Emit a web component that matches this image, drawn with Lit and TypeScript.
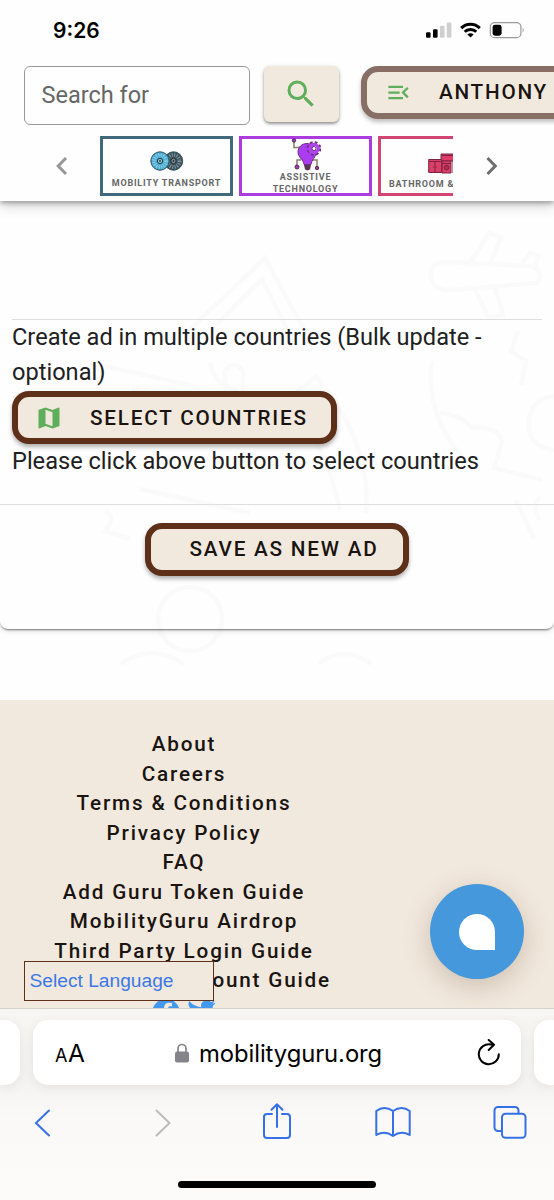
import { LitElement, html, css, svg } from "lit";
import { customElement } from "lit/decorators.js";

const FOOTER_LINKS = [
  "About",
  "Careers",
  "Terms & Conditions",
  "Privacy Policy",
  "FAQ",
  "Add Guru Token Guide",
  "MobilityGuru Airdrop",
  "Third Party Login Guide",
];

@customElement("status-bar")
class StatusBar extends LitElement {
  static styles = css`
    :host { display: flex; height: 61px; padding: 0 29px 0 53px; box-sizing: border-box; justify-content: space-between; }
    .time { font: 600 21px/61px Inter, sans-serif; letter-spacing: 0; color: #000; }
    .signals { margin-top: 20px; display: block; }
  `;
  render() {
    return html`
      <span class="time">9:26</span>
      <svg class="signals" width="100" height="22" viewBox="0 0 100 22">
        <rect x="1" y="12.2" width="4.6" height="5.6" rx="1.2" />
        <rect x="8" y="9.2" width="4.6" height="8.6" rx="1.2" />
        <rect x="15" y="5.8" width="4.6" height="12" rx="1.2" fill="#cfcfcf" />
        <rect x="21.8" y="2.4" width="4.6" height="15.4" rx="1.2" fill="#cfcfcf" />
        <g fill="none" stroke="#000" stroke-width="3">
          <path d="M36.2 8.1a13.2 13.2 0 0 1 18.6 0" />
          <path d="M39.7 11.8a8.2 8.2 0 0 1 11.6 0" />
        </g>
        <path d="M45.5 17.6l-3.1-3.1a4.4 4.4 0 0 1 6.2 0z" />
        <rect x="65.3" y="2.7" width="30.6" height="15" rx="4.3" fill="none" stroke="#999" stroke-width="1.2" />
        <rect x="67.6" y="4.7" width="9" height="11" rx="2.4" />
        <path d="M97.6 7.8q2.2 2.3 0 4.6z" fill="#999" />
      </svg>
    `;
  }
}

@customElement("app-header")
class AppHeader extends LitElement {
  static styles = css`
    :host { display: flex; flex-direction: column; height: 140px; background: #fff; position: relative; z-index: 2; box-shadow: 0 2px 5px rgba(0,0,0,.32), 0 5px 13px rgba(0,0,0,.16); font-family: Roboto, sans-serif; }
    .row { display: flex; align-items: flex-start; padding: 5px 0 0 24px; height: 70px; overflow: hidden; }
    .field { box-sizing: border-box; width: 226px; height: 59px; border: 1.5px solid #999; border-radius: 6px; padding-left: 16.5px; font-size: 23.5px; line-height: 57px; color: #666; flex: none; }
    .search { flex: none; width: 75px; height: 56px; margin-left: 13.5px; border-radius: 6px; background: #f2e9de; box-shadow: 0 2px 3px rgba(0,0,0,.35), 0 1px 5px rgba(0,0,0,.12); display: flex; align-items: center; justify-content: center; }
    .user { flex: none; box-sizing: border-box; margin-left: 22.5px; width: 240px; height: 53px; border: 6px solid #886f65; border-radius: 17px; background: #f2e9de; box-shadow: 0 3px 4px rgba(0,0,0,.25); display: flex; align-items: center; padding-left: 18px; gap: 27px; font-size: 20.7px; font-weight: 500; letter-spacing: 1.75px; line-height: 39px; color: #1a1411; }
    .user span { margin-top: -1px; }
    .tabs { display: flex; padding-left: 47.5px; height: 60px; align-items: stretch; }
    .arrow { flex: none; width: 29px; height: 60px; }
    .viewport { width: 353px; margin-left: 23.5px; display: flex; gap: 6px; overflow: hidden; }
    .card { flex: none; box-sizing: border-box; width: 133px; border: 3px solid; display: flex; flex-direction: column; align-items: center; justify-content: center; text-align: center; font-size: 9px; line-height: 11.6px; font-weight: 700; letter-spacing: .78px; white-space: nowrap; }
    .card span { color: #666; padding-top: 1px; }
    .purple { border-color: #ab3de0; padding-top: 2px; }
    .pink { border-color: #d24472; padding-top: 12px; }
    .pink span { align-self: flex-start; padding-left: 8px; }
    .blue { border-color: #406a7b; padding-top: 9px; }
    .card svg { display: block; flex: none; }
    .next { margin-left: 25px; }
  `;

  wheel(cx: number, fill: string, line: string) {
    return svg`
      <circle cx=${cx} cy="10" r="9.2" fill=${fill} stroke="#34525f" stroke-width="1" />
      <circle cx=${cx} cy="10" r="6" fill="none" stroke=${line} stroke-width="3.8" stroke-dasharray="1.1 1.25" />
      <circle cx=${cx} cy="10" r="2.6" fill=${line} stroke="#27343b" />
      <circle cx=${cx} cy="10" r=".9" fill="#27343b" />`;
  }

  render() {
    return html`
      <div class="row">
        <div class="field">Search for</div>
        <div class="search">
          <svg width="36" height="36" viewBox="0 0 24 24" fill="#5fae5b"><path d="M15.5 14h-.79l-.28-.27A6.47 6.47 0 0 0 16 9.5 6.5 6.5 0 1 0 9.5 16c1.61 0 3.09-.59 4.23-1.57l.27.28v.79l5 4.99L20.49 19l-4.99-5zm-6 0C7.01 14 5 11.99 5 9.5S7.01 5 9.5 5 14 7.01 14 9.5 11.99 14 9.5 14z" /></svg>
        </div>
        <div class="user">
          <svg width="27" height="27" viewBox="0 0 24 24" fill="#5fae5b"><path d="M3 18h13v-2H3v2zM3 13h10v-2H3v2zm0-7v2h13V6H3zm18 9.59L17.42 12 21 8.41 19.59 7l-5 5 5 5L21 15.59z" /></svg>
          <span>ANTHONY</span>
        </div>
      </div>
      <div class="tabs">
        <svg class="arrow" viewBox="0 0 29 60"><path d="M18 22l-7.8 8 7.8 8" fill="none" stroke="#979797" stroke-width="3" /></svg>
        <div class="viewport">
          <div class="card blue">
            <svg width="34" height="26" viewBox="0 0 34 26">${this.wheel(23.5, "#3d4e57", "#7894a0")}${this.wheel(10, "#43a9d0", "#8fcde2")}</svg>
            <span>MOBILITY TRANSPORT</span>
          </div>
          <div class="card purple">
            <svg width="30" height="33" viewBox="0 0 30 33">
              <g fill="none" stroke="#8a8069" stroke-width="1.5"><path d="M3 3v6.5h6M6 28v-6h4M26 29v-7h-5" /></g>
              <path d="M7 14c0-5 4-8.5 9-8.5s9 4 9 9c0 5-4.5 7-5 12h-7c-.5-5-6-7-6-12.5z" fill="#ac3cf0" stroke="#69317f" />
              <path d="M13 27h7l-1 4.5-2.5 1-2.5-1z" fill="#5c3554" />
              <circle cx="23" cy="10.5" r="5.8" fill="none" stroke="#69317f" stroke-width="3" stroke-dasharray="2.6 1.95" />
              <circle cx="23" cy="10.5" r="4.2" fill="none" stroke="#ae46ec" stroke-width="3.2" />
              <circle cx="23" cy="10.5" r="2" fill="#fff" stroke="#69317f" />
              <g fill="#a13abd" stroke="#4c2c4e"><circle cx="3" cy="2.5" r="1.7" /><circle cx="6" cy="29" r="2" /><circle cx="26" cy="30" r="1.7" /></g>
            </svg>
            <span>ASSISTIVE<br />TECHNOLOGY</span>
          </div>
          <div class="card pink">
            <svg width="34" height="25" viewBox="0 0 34 25" stroke="#7b2342" stroke-width="1" fill="#dc3e68">
              <path d="M13 1h18v7H13zM25 8h6v12h-6z" />
              <path d="M.7 6.5h13v13H.7zM14 8h9v12h-9z" />
              <path d="M.7 8.5h12M7 9v10M5 14h1M8 14h1M14 10.5h9M14 2.5h16" />
              <circle cx="18.5" cy="14.5" r="2.3" fill="#b42c50" />
            </svg>
            <span>BATHROOM &amp;</span>
          </div>
        </div>
        <svg class="arrow next" viewBox="0 0 29 60"><path d="M9.5 22l7.8 8-7.8 8" fill="none" stroke="#6e6e6e" stroke-width="3" /></svg>
      </div>
    `;
  }
}

@customElement("ad-form")
class AdForm extends LitElement {
  static styles = css`
    :host { display: block; height: 499px; position: relative; background: #fefefe; font-family: Roboto, sans-serif; color: #202020; }
    .doodles { position: absolute; left: 0; top: 0; }
    .panel { position: relative; box-sizing: border-box; height: 428px; border-radius: 0 0 8px 8px; padding-top: 118px; box-shadow: 0 2px 2px -1px rgba(0,0,0,.5), 0 2px 6px rgba(0,0,0,.12); }
    .section { margin: 0 12px; border-top: 1.5px solid #dedede; height: 185px; box-sizing: border-box; font-size: 23.6px; line-height: 35.4px; }
    p { margin: 0; }
    .lead { line-height: 35px; height: 71px; }
    .button { box-sizing: border-box; height: 53px; border: 6px solid #5e2f19; border-radius: 17px; background: #f2e9de; box-shadow: 0 3px 4px rgba(0,0,0,.3); display: flex; align-items: center; font-size: 20.7px; font-weight: 500; letter-spacing: 1.8px; color: #1a1411; line-height: 41px; white-space: nowrap; }
    .select { width: 325px; padding-left: 17px; gap: 27px; }
    .select span { padding-top: 1px; }
    .actions { border-top: 1.5px solid #dedede; padding-top: 18px; display: flex; justify-content: center; }
    .save { width: 264px; padding-left: 38.5px; }
  `;
  render() {
    return html`
      <svg class="doodles" width="554" height="465" viewBox="0 0 554 465" fill="none" stroke="#fafafa" stroke-width="4.5">
        <path d="M186 132l79-75 42 77M216 124l46-46 25 50M238 190q-24-6-28-28M104 165l90 20M132 187l48 12M225 190v-20q8-12 18 0v20M340 310q-12-65-55-112M366 312q6-70-50-136l-33 25M140 288l110 24M105 310q12 5 0 20l25 8" />
        <path d="M444 61q-16 2-13 17 4 12 20 11l86-7q8-12-6-17zM470 62l19-30 12 4-11 28M475 88l13 28 15-2-8-27M522 62l8-10 8 3-3 12" />
        <path d="M432 160q-8 60 40 106M440 212q20 1 32 15 28-2 30 15l-8 25 48 12M518 130l-7 20 15 10-5 24M554 195q-24 3-25 27t25 27M516 299l18 39M540 296q-10 9 0 23" />
        <circle cx="190" cy="418" r="32" /><path d="M121 463q30-22 63 0M318 463q26-20 53 0" />
      </svg>
      <div class="panel">
        <div class="section">
          <p class="lead">Create ad in multiple countries (Bulk update - optional)</p>
          <div class="button select">
            <svg width="28" height="28" viewBox="0 0 24 24" fill="#5fae5b"><path d="M20.5 3l-.16.03L15 5.1 9 3 3.36 4.9c-.21.07-.36.25-.36.48V20.5c0 .28.22.5.5.5l.16-.03L9 18.9l6 2.1 5.64-1.9c.21-.07.36-.25.36-.48V3.5c0-.28-.22-.5-.5-.5zM15 19l-6-2.11V5l6 2.11V19z" /></svg>
            <span>SELECT COUNTRIES</span>
          </div>
          <p>Please click above button to select countries</p>
        </div>
        <div class="actions"><div class="button save">SAVE AS NEW AD</div></div>
      </div>
    `;
  }
}

@customElement("site-footer")
class SiteFooter extends LitElement {
  static styles = css`
    :host { display: block; position: relative; box-sizing: border-box; height: 308px; background: #f2e9de; padding-top: 30px; overflow: hidden; font-family: Roboto, sans-serif; }
    .links { width: 368px; display: flex; flex-direction: column; align-items: center; font-size: 20.7px; line-height: 29.55px; font-weight: 500; letter-spacing: 1.82px; color: #1a1411; white-space: nowrap; }
    .last { align-self: flex-end; margin-right: 37px; }
    .social { display: flex; gap: 7px; padding-left: 151.5px; margin-top: 3.5px; }
    .language { position: absolute; left: 24px; top: 261px; width: 190px; height: 40px; box-sizing: border-box; border: 1.5px solid #5e2f19; background: #f2e9de; padding-left: 4.5px; font: 19.2px/38px "Liberation Sans", sans-serif; color: #3b78e7; }
    .chat { position: absolute; left: 430px; top: 184px; width: 94px; height: 95px; border-radius: 50%; background: #4498db; display: flex; align-items: center; justify-content: center; box-shadow: 0 7px 28px rgba(80,50,20,.24); }
    .drop { width: 36px; height: 36px; background: #fff; border-radius: 50% 50% 0 50%; }
  `;
  render() {
    return html`
      <div class="links">
        ${FOOTER_LINKS.map((label) => html`<span>${label}</span>`)}
        <span class="last">ount Guide</span>
      </div>
      <div class="social">
        <svg width="28" height="28" viewBox="0 0 28 28"><circle cx="14" cy="14" r="14" fill="#4498ee" /><path d="M12 28V16H8.5v-4H12V9c0-3.5 2-5.3 5-5.3l3 .2v3.4h-1.7c-1.7 0-2.1.8-2.1 2V12H20l-.6 4h-3.2v12z" fill="#f2e9de" /></svg>
        <svg width="29" height="26" viewBox="0 0 24 22"><path d="M23.95 3.2a10 10 0 0 1-2.82.77 4.96 4.96 0 0 0 2.16-2.72 9.8 9.8 0 0 1-3.12 1.19A4.92 4.92 0 0 0 11.78 6.92 13.9 13.9 0 0 1 1.67 1.79a4.93 4.93 0 0 0 1.52 6.57A4.9 4.9 0 0 1 .96 7.75a4.93 4.93 0 0 0 3.95 4.9 4.9 4.9 0 0 1-2.21.08 4.93 4.93 0 0 0 4.6 3.42A9.9 9.9 0 0 1 0 18.2a14 14 0 0 0 7.55 2.21c9.05 0 14.3-7.65 13.98-14.55a10 10 0 0 0 2.42-2.66z" fill="#4498ee" /></svg>
      </div>
      <div class="language">Select Language</div>
      <div class="chat"><div class="drop"></div></div>
    `;
  }
}

@customElement("browser-bar")
class BrowserBar extends LitElement {
  static styles = css`
    :host { display: flex; flex-direction: column; box-sizing: border-box; height: 192px; border-top: 1px solid #d8d2cc; padding-top: 11px; background: linear-gradient(#f8f6f3 0, #f5f3f1 70px, #fbf9f8 110px, #fcfbf9 100%); overflow: hidden; }
    .strip { display: flex; gap: 13px; height: 65px; }
    .pill { box-sizing: border-box; background: #fff; border-radius: 15px; box-shadow: 0 3px 12px rgba(0,0,0,.07); }
    .before { width: 20px; border-radius: 0 15px 15px 0; }
    .after { width: 20px; border-radius: 15px 0 0 15px; }
    .address { width: 488px; display: flex; align-items: center; padding: 0 20px 0 22px; color: #000; font-family: Inter, sans-serif; }
    .size { display: flex; align-items: baseline; width: 120px; font-size: 18px; line-height: 30px; padding-top: 4px; }
    .big { font-size: 24.5px; margin-left: .5px; }
    .lock { width: 14px; height: 20px; margin-right: 10px; }
    .host { flex: 1; font-size: 23.8px; letter-spacing: -.06px; padding-top: 2px; }
    .tools { display: flex; padding-left: 33px; margin-top: 16px; height: 44px; }
    .tools svg { display: block; flex: none; fill: none; stroke: #3571e5; stroke-width: 2; stroke-linecap: round; stroke-linejoin: round; }
    .tools .off { stroke: #bcbcbc; margin-left: 100px; }
    .share { margin-left: 89px; }
    .book { margin-left: 83px; }
    .pages { margin-left: 81.5px; }
    .home { width: 198px; height: 7px; border-radius: 4px; background: #000; margin: 36px auto 0; }
  `;
  render() {
    return html`
      <div class="strip">
        <div class="pill before"></div>
        <div class="pill address">
          <span class="size"><span>A</span><span class="big">A</span></span>
          <svg class="lock" viewBox="0 0 14 20"><rect y="8.5" width="14" height="11" rx="2" fill="#85848a" /><path d="M3 9V5.5a4 4 0 0 1 8 0V9" fill="none" stroke="#85848a" stroke-width="1.7" /></svg>
          <span class="host">mobilityguru.org</span>
          <svg width="24" height="28" viewBox="0 0 24 28" fill="none" stroke="#000" stroke-width="2" stroke-linecap="round" stroke-linejoin="round"><path d="M21.8 15.3a10 10 0 1 1-8-9.8h2.7M11.7 1l5.3 4.7-5.3 5.3" /></svg>
        </div>
        <div class="pill after"></div>
      </div>
      <div class="tools">
        <svg width="20" height="44" viewBox="0 0 20 44"><path d="M16 9.500L3 22l13 12.500" /></svg>
        <svg class="off" width="20" height="44" viewBox="0 0 20 44"><path d="M3.500 9.500L16.500 22l-13 12.500" /></svg>
        <svg class="share" width="30" height="44" viewBox="0 0 30 44"><path d="M10 13H5a3 3 0 0 0-3 3v18a3 3 0 0 0 3 3h20a3 3 0 0 0 3-3V16a3 3 0 0 0-3-3h-5M15 26V3.500M9.500 8.700L15 3.300l5.500 5.400" /></svg>
        <svg class="book" width="36" height="44" viewBox="0 0 36 44"><path d="M1.300 10q8-6 16.700 0v25q-8-6-16.700-1zM34.700 10q-8-6-16.700 0v25q8-6 16.700-1z" /></svg>
        <svg class="pages" width="34" height="44" viewBox="0 0 34 44"><path d="M9 30H5a3.500 3.500 0 0 1-3.500-3.500V9.500A3.500 3.500 0 0 1 5 6h17a3.500 3.500 0 0 1 3.500 3.500v3" /><rect x="9" y="12.700" width="23.500" height="24" rx="3.500" /></svg>
      </div>
      <div class="home"></div>
    `;
  }
}

@customElement("app-root")
class AppRoot extends LitElement {
  static styles = css`
    :host { display: flex; flex-direction: column; width: 554px; height: 1200px; overflow: hidden; background: #fefefe; }
    status-bar, app-header, ad-form, site-footer, browser-bar { flex: none; }
    status-bar { background: #fefefe; position: relative; z-index: 3; }
    app-header { background: #fefefe; }
  `;
  render() {
    return html`
      <status-bar></status-bar>
      <app-header></app-header>
      <ad-form></ad-form>
      <site-footer></site-footer>
      <browser-bar></browser-bar>
    `;
  }
}
